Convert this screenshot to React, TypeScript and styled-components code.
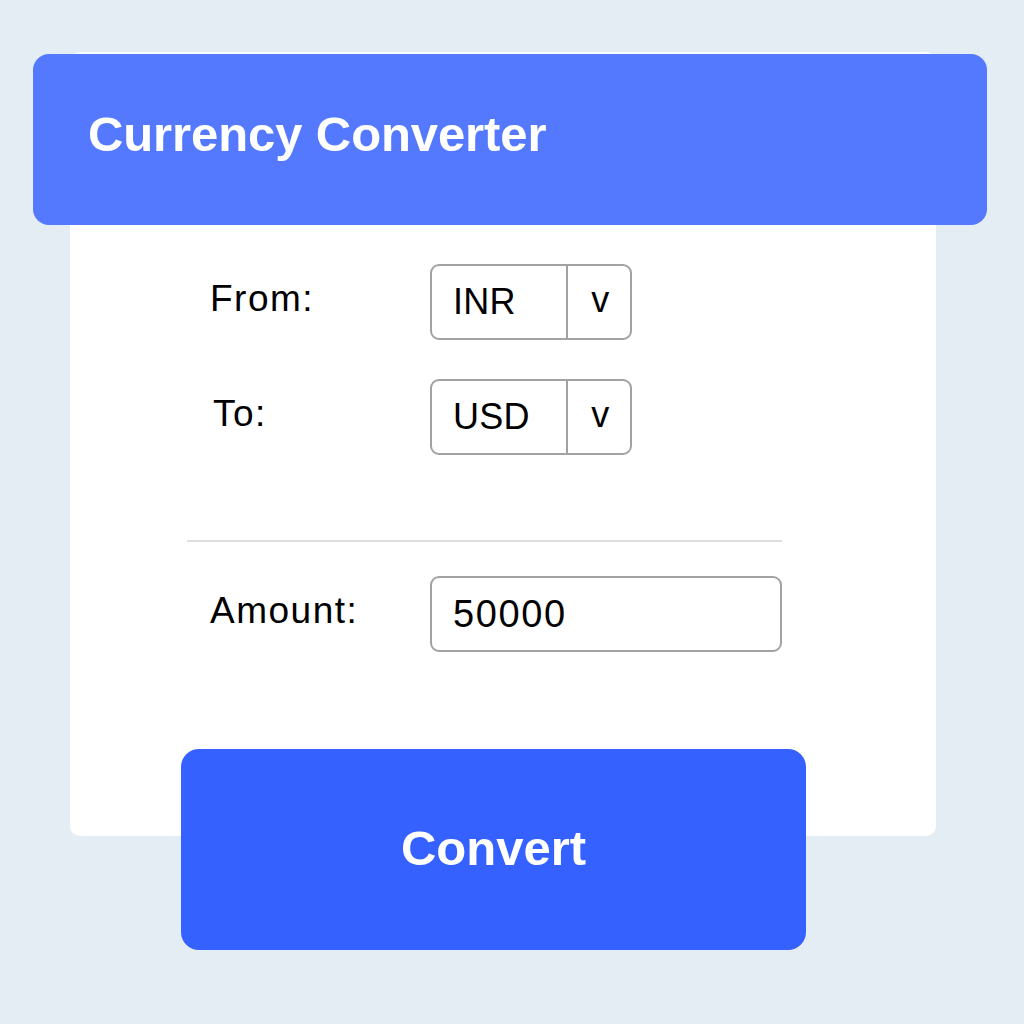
import styled, { createGlobalStyle } from "styled-components";

const GlobalStyle = createGlobalStyle`
  html, body {
    margin: 0;
    padding: 0;
    background: #e4edf4;
  }
  body {
    font-family: "Liberation Sans", Arial, sans-serif;
    color: #000;
  }
`;

const Page = styled.div`
  width: 1024px;
  height: 1024px;
  box-sizing: border-box;
  padding: 52px 0 0 70px;
  display: flex;
  flex-direction: column;
  align-items: flex-start;
`;

const Card = styled.div`
  width: 866px;
  height: 784px;
  box-sizing: border-box;
  background: #fff;
  border-radius: 10px;
  display: flex;
  flex-direction: column;
`;

const Header = styled.div`
  margin: 2px -51px 0 -37px;
  height: 171px;
  box-sizing: border-box;
  background: #5479ff;
  border-radius: 16px;
  display: flex;
  align-items: center;
  padding: 0 0 12px 55px;
`;

const Title = styled.h1`
  margin: 0;
  color: #fff;
  font-size: 49px;
  font-weight: 700;
  letter-spacing: -0.1px;
`;

const Form = styled.div`
  margin: 39px 0 0 117px;
  width: 595px;
  display: flex;
  flex-direction: column;
`;

const Row = styled.div<{ $gap?: number }>`
  display: grid;
  grid-template-columns: 243px auto;
  align-items: center;
  margin-top: ${(p) => p.$gap ?? 0}px;
`;

const Label = styled.label<{ $nudge?: number }>`
  padding-left: ${(p) => 23 + (p.$nudge ?? 0)}px;
  font-size: 37px;
  letter-spacing: 1.5px;
  margin-top: -7px;
`;

const Select = styled.div`
  width: 202px;
  height: 76px;
  box-sizing: border-box;
  border: 2px solid #a2a2a2;
  border-radius: 9px;
  display: grid;
  grid-template-columns: 136px 1fr;
  font-size: 36px;
  letter-spacing: 0.3px;
`;

const SelectValue = styled.span`
  display: flex;
  align-items: center;
  padding-left: 21px;
  border-right: 2px solid #a2a2a2;
`;

const Caret = styled.span`
  display: flex;
  align-items: center;
  justify-content: center;
  padding: 0 0 4px 3px;
`;

const Divider = styled.hr`
  margin: 85px 0 0;
  border: none;
  height: 2px;
  background: #dedede;
`;

const Input = styled.div`
  width: 352px;
  height: 76px;
  box-sizing: border-box;
  border: 2px solid #a2a2a2;
  border-radius: 9px;
  display: flex;
  align-items: center;
  padding-left: 21px;
  font-size: 38px;
  letter-spacing: 1.6px;
`;

const ConvertButton = styled.button`
  margin: -87px 0 0 111px;
  width: 625px;
  height: 201px;
  border: none;
  border-radius: 18px;
  background: #3461ff;
  color: #fff;
  font-family: "Liberation Sans", Arial, sans-serif;
  font-size: 49px;
  font-weight: 700;
  letter-spacing: 0;
  padding-bottom: 4px;
  cursor: pointer;
`;

export default function App() {
  return (
    <>
      <GlobalStyle />
      <Page>
        <Card>
          <Header>
            <Title>Currency Converter</Title>
          </Header>
          <Form>
            <Row>
              <Label>From:</Label>
              <Select>
                <SelectValue>INR</SelectValue>
                <Caret>v</Caret>
              </Select>
            </Row>
            <Row $gap={39}>
              <Label $nudge={3}>To:</Label>
              <Select>
                <SelectValue>USD</SelectValue>
                <Caret>v</Caret>
              </Select>
            </Row>
            <Divider />
            <Row $gap={34}>
              <Label>Amount:</Label>
              <Input>50000</Input>
            </Row>
          </Form>
        </Card>
        <ConvertButton>Convert</ConvertButton>
      </Page>
    </>
  );
}
